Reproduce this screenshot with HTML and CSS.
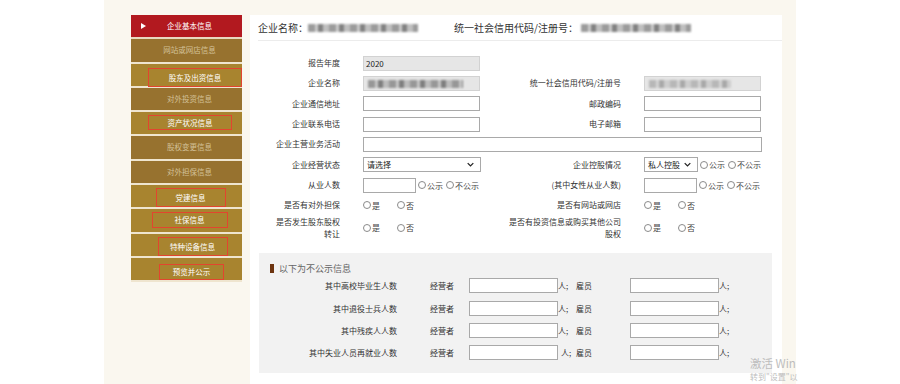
FILE: index.html
```html
<!DOCTYPE html>
<html lang="zh-CN">
<head>
  <meta charset="UTF-8" />
  <title>企业基本信息</title>
  <link rel="stylesheet" href="styles.css">
</head>
<body>
  <div class="page">
    <aside class="sidebar">
      <ul class="nav">
        <li class="nav-item active"><span class="arrow"></span>企业基本信息</li>
        <li class="nav-item off">网站或网店信息</li>
        <li class="nav-item on"><span class="mark mark-gd">股东及出资信息</span></li>
        <li class="nav-item off">对外投资信息</li>
        <li class="nav-item on"><span class="mark mark-zc">资产状况信息</span></li>
        <li class="nav-item off">股权变更信息</li>
        <li class="nav-item off">对外担保信息</li>
        <li class="nav-item on"><span class="mark mark-dj">党建信息</span></li>
        <li class="nav-item on"><span class="mark mark-sb">社保信息</span></li>
        <li class="nav-item on"><span class="mark mark-tz">特种设备信息</span></li>
        <li class="nav-item on"><span class="mark mark-yl">预览并公示</span></li>
      </ul>
    </aside>

    <main class="main">
      <div class="head">
        <span>企业名称：</span><span class="blur blur-name"></span>
        <span class="head-code">统一社会信用代码/注册号：</span><span class="blur blur-code"></span>
      </div>

      <div class="form">
        <div class="lbl">报告年度</div>
        <div class="fld"><input class="txt ro" value="2020" readonly></div>
        <div class="lbl"></div>
        <div class="fld"></div>

        <div class="lbl">企业名称</div>
        <div class="fld"><div class="txt ro"><span class="blur blur-in1"></span></div></div>
        <div class="lbl">统一社会信用代码/注册号</div>
        <div class="fld"><div class="txt ro"><span class="blur blur-in2"></span></div></div>

        <div class="lbl">企业通信地址</div>
        <div class="fld"><input class="txt"></div>
        <div class="lbl">邮政编码</div>
        <div class="fld"><input class="txt"></div>

        <div class="lbl">企业联系电话</div>
        <div class="fld"><input class="txt"></div>
        <div class="lbl">电子邮箱</div>
        <div class="fld"><input class="txt"></div>

        <div class="lbl">企业主营业务活动</div>
        <div class="fld span3"><input class="txt wide"></div>

        <div class="lbl">企业经营状态</div>
        <div class="fld">
          <div class="sel">请选择<svg viewBox="0 0 10 6" width="7" height="5"><path d="M1 1l4 4 4-4" fill="none" stroke="#222" stroke-width="1.8"/></svg></div>
        </div>
        <div class="lbl">企业控股情况</div>
        <div class="fld">
          <div class="sel short">私人控股<svg viewBox="0 0 10 6" width="7" height="5"><path d="M1 1l4 4 4-4" fill="none" stroke="#222" stroke-width="1.8"/></svg></div>
          <label class="radio"><input type="radio" name="kg">公示</label>
          <label class="radio"><input type="radio" name="kg">不公示</label>
        </div>

        <div class="lbl">从业人数</div>
        <div class="fld">
          <input class="txt short">
          <label class="radio"><input type="radio" name="cy">公示</label>
          <label class="radio"><input type="radio" name="cy">不公示</label>
        </div>
        <div class="lbl">(其中女性从业人数)</div>
        <div class="fld">
          <input class="txt short">
          <label class="radio"><input type="radio" name="nx">公示</label>
          <label class="radio"><input type="radio" name="nx">不公示</label>
        </div>

        <div class="lbl">是否有对外担保</div>
        <div class="fld">
          <label class="radio yn"><input type="radio" name="db">是</label>
          <label class="radio yn"><input type="radio" name="db">否</label>
        </div>
        <div class="lbl">是否有网站或网店</div>
        <div class="fld">
          <label class="radio yn"><input type="radio" name="wz">是</label>
          <label class="radio yn"><input type="radio" name="wz">否</label>
        </div>

        <div class="lbl">是否发生股东股权<br>转让</div>
        <div class="fld">
          <label class="radio yn"><input type="radio" name="zr">是</label>
          <label class="radio yn"><input type="radio" name="zr">否</label>
        </div>
        <div class="lbl">是否有投资信息或购买其他公司<br>股权</div>
        <div class="fld">
          <label class="radio yn"><input type="radio" name="tz">是</label>
          <label class="radio yn"><input type="radio" name="tz">否</label>
        </div>
      </div>

      <div class="hidden-info">
        <div class="hi-title"><span class="hi-mark"></span>以下为不公示信息</div>
        <div class="hi-row">
          <span class="hi-lbl">其中高校毕业生人数</span>
          <span class="hi-who">经营者</span><input class="txt num"><span class="hi-unit">人;</span>
          <span class="hi-emp">雇员</span><input class="txt num"><span>人;</span>
        </div>
        <div class="hi-row">
          <span class="hi-lbl">其中退役士兵人数</span>
          <span class="hi-who">经营者</span><input class="txt num"><span class="hi-unit">人;</span>
          <span class="hi-emp">雇员</span><input class="txt num"><span>人;</span>
        </div>
        <div class="hi-row">
          <span class="hi-lbl">其中残疾人人数</span>
          <span class="hi-who">经营者</span><input class="txt num"><span class="hi-unit">人;</span>
          <span class="hi-emp">雇员</span><input class="txt num"><span>人;</span>
        </div>
        <div class="hi-row">
          <span class="hi-lbl">其中失业人员再就业人数</span>
          <span class="hi-who">经营者</span><input class="txt num"><span class="hi-unit pad">人;</span>
          <span class="hi-emp">雇员</span><input class="txt num"><span>人;</span>
        </div>
      </div>
    </main>

    <div class="watermark">
      <div class="wm-big">激活 Win</div>
      <div class="wm-small">转到"设置"以</div>
    </div>
  </div>
</body>
</html>
```

FILE: styles.css
```css
* { margin: 0; padding: 0; box-sizing: border-box; }

html, body {
  background: #fff;
  font-family: "Noto Sans CJK SC", "Liberation Sans", sans-serif;
  color: #333;
}

.page {
  position: relative;
  width: 692px;
  height: 384px;
  margin-left: 104px;
  padding: 15px 0 0 27px;
  background: #faf7ef;
  display: flex;
  align-items: flex-start;
  gap: 8px;
}

/* left menu */
.sidebar {
  width: 111px;
  flex-shrink: 0;
}

.nav { list-style: none; }

.nav-item {
  position: relative;
  height: 24.3px;
  line-height: 22px;
  padding-left: 6px;
  border-bottom: 2px solid #efe5cf;
  text-align: center;
  font-size: 7.5px;
  color: #fff;
  background: #a8842f;
}

.nav-item.active {
  background: #b2191f;
  border-bottom-color: #e9d9c0;
}

.nav-item.off {
  background: #97722f;
  color: #d3c199;
}

.arrow {
  position: absolute;
  left: 10px;
  top: 8px;
  border-left: 5px solid #fff;
  border-top: 3.5px solid transparent;
  border-bottom: 3.5px solid transparent;
}

.mark {
  display: inline-block;
  height: 17px;
  line-height: 15px;
  margin-top: 3px;
  border: 1px solid #e2452f;
  vertical-align: top;
}
.mark-gd { width: 94px; margin-left: 11px; margin-top: 4px; height: 19px; line-height: 17px; }
.mark-zc { width: 84px; margin-left: 1px; height: 15px; line-height: 13px; }
.mark-dj { width: 70px; margin-left: 2px; height: 19px; line-height: 17px; }
.mark-sb { width: 76px; margin-left: 0; height: 16px; line-height: 14px; }
.mark-tz { width: 70px; margin-left: 6px; height: 19px; line-height: 17px; }
.mark-yl { width: 65px; margin-left: 4px; height: 16px; line-height: 14px; margin-top: 6px; }

/* main panel */
.main {
  width: 532px;
  height: 369px;
  background: #fff;
}

.head {
  height: 26px;
  line-height: 25px;
  margin-left: 8px;
  border-bottom: 1px solid #ececec;
  font-size: 10px;
  color: #333;
  display: flex;
  align-items: center;
}

.head-code { margin-left: 36px; }

.blur {
  display: inline-block;
  height: 8px;
  background: repeating-linear-gradient(90deg, #8a8a8a 0 7px, #c4c4c4 7px 10px, #6c6c6c 10px 15px, #b5b5b5 15px 21px);
  filter: blur(1.2px);
  opacity: 0.85;
}
.blur-name { width: 110px; }
.blur-code { width: 110px; margin-left: 3px; }
.blur-in1 { width: 95px; margin: 3px 0 0 2px; }
.blur-in2 { width: 82px; margin: 3px 0 0 2px; opacity: 0.5; }

/* upper form */
.form {
  display: grid;
  grid-template-columns: 104px 118px 163px 138px;
  grid-template-rows: repeat(8, 20.33px) 24px;
  align-items: center;
  margin-left: 9px;
  padding-top: 12px;
  font-size: 8px;
}

.lbl {
  text-align: right;
  padding-right: 23px;
  line-height: 12px;
  color: #333;
}

.fld {
  display: flex;
  align-items: center;
}

.span3 { grid-column: 2 / 5; }

.txt {
  display: block;
  width: 117px;
  height: 15px;
  border: 1px solid #a9a9a9;
  background: #fff;
  font-family: inherit;
  font-size: 8px;
  color: #222;
  padding: 0 2px;
  outline: none;
}

.txt.ro {
  background: #e6e6e6;
  border-color: #d2d2d2;
}

.txt.wide { width: 399px; }
.txt.short { width: 53px; }

.sel {
  width: 118px;
  height: 15px;
  border: 1px solid #a9a9a9;
  background: #fff;
  padding: 0 6px 0 3px;
  display: flex;
  align-items: center;
  justify-content: space-between;
  font-size: 8px;
  color: #222;
}

.sel.short { width: 54px; }

.radio {
  display: inline-flex;
  align-items: center;
  font-size: 8px;
  color: #444;
  margin-left: 2px;
  white-space: nowrap;
}

.radio + .radio { margin-left: 3px; }

.radio input {
  appearance: none;
  -webkit-appearance: none;
  width: 8px;
  height: 8px;
  margin: 0 1px 0 0;
  border: 1px solid #8a8a8a;
  border-radius: 50%;
  background: #fff;
}

.radio.yn { margin-left: 0; margin-right: 17px; }
.radio.yn + .radio.yn { margin-left: 0; }

/* not published block */
.hidden-info {
  width: 513px;
  height: 120px;
  margin: 13px 0 0 9px;
  padding-top: 9px;
  background: #f2f2f2;
  font-size: 8px;
}

.hi-title {
  display: flex;
  align-items: center;
  height: 13px;
  padding-left: 11px;
  font-size: 9px;
  color: #666;
}

.hi-mark {
  width: 4px;
  height: 9px;
  margin-right: 5px;
  background: #6d3410;
}

.hi-row {
  display: flex;
  align-items: center;
  height: 22.3px;
}

.hi-lbl {
  width: 138px;
  text-align: right;
}

.hi-who {
  width: 72px;
  padding-left: 33px;
}

.txt.num { width: 89px; }

.hi-unit { width: 18px; }
.hi-unit.pad { padding-left: 3px; }

.hi-emp { width: 54px; }

/* windows watermark */
.watermark {
  position: absolute;
  left: 646px;
  top: 356px;
  color: #bdbdbd;
  white-space: nowrap;
}

.wm-big { font-size: 11.5px; line-height: 15px; }
.wm-small { font-size: 8px; line-height: 12px; }
```
